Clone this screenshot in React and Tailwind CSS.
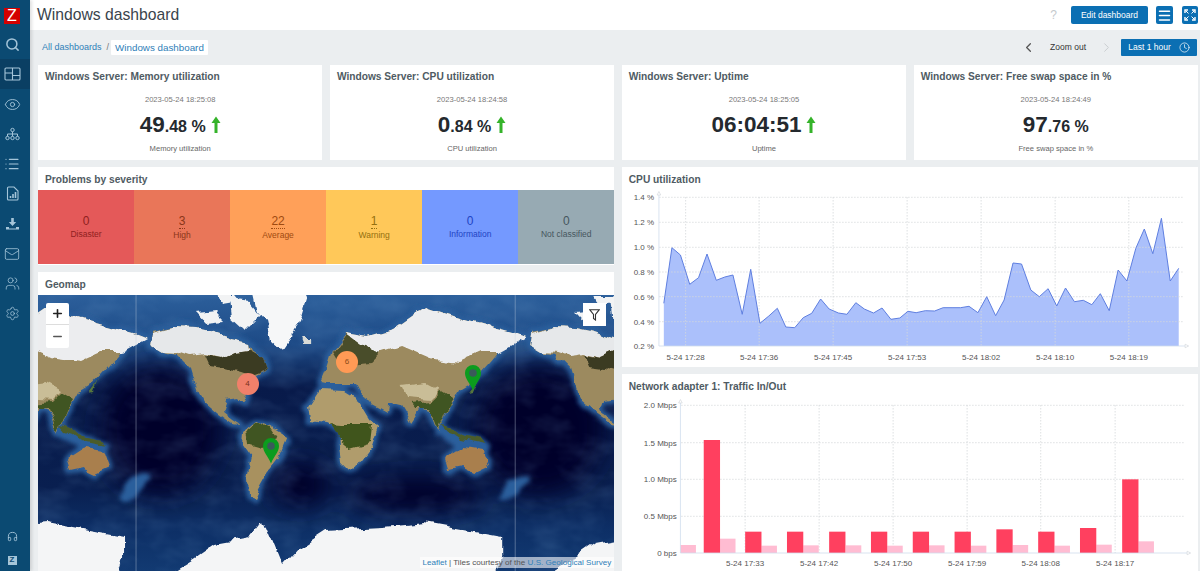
import React from 'react';
import { Search, Eye, List, Mail, Users, Settings, Headphones, ChevronLeft, ChevronRight, Clock, Menu, Plus, Minus } from 'lucide-react';

const font = { fontFamily: '"Liberation Sans", Arial, sans-serif' };

const DashIcon = () => (
  <svg width="17" height="14" viewBox="0 0 17 14" fill="none" stroke="currentColor" strokeWidth="1.1">
    <rect x="1" y="1" width="15" height="12" rx="1" />
    <path d="M8.5 1v12M1 6h7.500M8.500 8.500H16" />
  </svg>
);

const MapIcon = () => (
  <svg width="15" height="14" viewBox="0 0 15 14" fill="none" stroke="currentColor" strokeWidth="1">
    <circle cx="7.500" cy="3" r="1.700" />
    <circle cx="2.500" cy="11" r="1.700" />
    <circle cx="7.500" cy="11" r="1.700" />
    <circle cx="12.500" cy="11" r="1.700" />
    <path d="M7.500 4.700v4.600M2.500 9.300V7h10v2.300" />
  </svg>
);

const ReportIcon = () => (
  <svg width="13" height="15" viewBox="0 0 13 15" fill="none" stroke="currentColor" strokeWidth="1.1">
    <path d="M2.500 1h5.500l4 4v8a1 1 0 0 1-1 1h-8.500a1 1 0 0 1-1-1v-11a1 1 0 0 1 1-1z" />
    <path d="M4.500 12v-2M7 12V8M9.500 12V6" strokeWidth="1.600" />
  </svg>
);

const ImportIcon = () => (
  <svg width="15" height="14" viewBox="0 0 15 14" fill="currentColor">
    <path d="M6.200 1h2.600v4h2.400l-3.700 4-3.700-4h2.400z" />
    <path d="M1 10h3v1.500h7V10h3v2.500H1z" />
  </svg>
);

const CardTitle = ({ children }) => (
  <div className="h-[23px] shrink-0 pl-[7px] pt-[6px] text-[10.200px] leading-[13px] font-bold text-[#4f5b63]">
    {children}
  </div>
);

const UpArrow = () => (
  <svg width="10" height="17" viewBox="0 0 10 17" className="ml-[5px] self-center">
    <path d="M5 0.500 9.500 7H6.500v10h-3V7H0.500z" fill="#35b32a" />
  </svg>
);

const StatCard = ({ title, date, big, small, label, arrow }) => (
  <div className="flex h-[95px] flex-col bg-white">
    <div className="-mt-[1.500px]">
      <CardTitle>{title}</CardTitle>
    </div>
    <div className="mt-[8.500px] text-center text-[7.600px] leading-[10px] text-[#777]">{date}</div>
    <div className="mt-[5px] flex h-[29px] items-center justify-center font-bold text-[#24292e]">
      <span className="text-[22.500px] leading-[29px]">{big}</span>
      {small && <span className="mt-[5px] text-[16px] leading-[20px]">{small}</span>}
      {arrow && <UpArrow />}
    </div>
    <div className="mt-[5px] text-center text-[7.600px] leading-[10px] text-[#666]">{label}</div>
  </div>
);

const severities = [
  { n: '0', label: 'Disaster', bg: 'bg-[#e45959]', text: 'text-[#8f1f1f]' },
  { n: '3', label: 'High', bg: 'bg-[#e97659]', text: 'text-[#8a3518]', link: true },
  { n: '22', label: 'Average', bg: 'bg-[#ffa059]', text: 'text-[#a04a10]', link: true },
  { n: '1', label: 'Warning', bg: 'bg-[#ffc859]', text: 'text-[#95700f]', link: true },
  { n: '0', label: 'Information', bg: 'bg-[#7499ff]', text: 'text-[#1f44c4]' },
  { n: '0', label: 'Not classified', bg: 'bg-[#97aab3]', text: 'text-[#46565e]' },
];

const northAmerica = '152,332 176,327 196,328 214,332 232,338 249,342 252,350 264,358 268,370 252,378 248,392 243,404 239,398 226,400 222,412 232,420 240,425 232,424 218,414 204,402 198,390 192,370 176,354 160,351 150,345';
const southAmerica = '243,432 256,421 270,427 288,438 280,457 268,472 258,490 254,499 249,497 248,477 252,458 242,444';
const africa = '308,408 319,391 345,392 358,400 370,420 378,427 372,445 352,470 342,460 338,430 325,424 310,422';
const eurasia = '320,384 325,372 332,350 345,333 368,337 392,330 425,307 465,320 512,333 525,338 512,337 495,357 488,365 468,387 458,393 453,402 445,413 437,433 428,410 420,407 410,422 400,405 388,402 387,410 365,398 358,385 325,385';
const australia = '445,460 465,447 482,450 488,467 475,473 462,467 448,470';
const islands = '435,425 462,437 486,446 470,452 446,438';
const zealand = '500,498 510,482 526,478 514,492';

const Shelf = () => (
  <g stroke="#2a5f9c" strokeWidth="7" strokeLinejoin="round" fill="#2a5f9c">
    {[northAmerica, southAmerica, africa, eurasia, australia, islands, zealand].map((p) => (
      <polygon key={p} points={p} />
    ))}
  </g>
);

const Land = () => (
  <g>
    {/* americas */}
    <polygon fill="#9c8a5e" points={northAmerica} />
    <polygon fill="#e6e8ea" points="152,333 176,327 196,328 214,332 232,338 249,342 250,350 235,352 222,358 205,354 190,356 178,352 160,351 150,345" />
    <polygon fill="#3a3b24" points="205,355 222,358 235,352 250,350 264,358 268,370 252,376 240,372 225,368 210,366" />
    <polygon fill="#f2f3f4" points="196,312 215,310 225,320 205,322" />
    <polygon fill="#f2f3f4" points="230,300 250,303 260,315 245,330 232,318" />
    <polygon fill="#f2f3f4" points="215,296 235,296 240,302 222,305" />
    <polygon fill="#f6f7f8" points="253,290 304,290 306,298 298,325 281,350 270,340 266,322 258,312" />
    <polygon fill="#d8dad6" points="302,338 312,338 312,343 304,343" />
    <polygon fill="#a8915f" points={southAmerica} />
    <polygon fill="#3f5423" points="246,431 256,422 270,428 278,440 262,448 248,444" />
    {/* africa */}
    <polygon fill="#b09c6c" points={africa} />
    <polygon fill="#41551f" points="328,424 340,425 372,425 370,442 350,448 340,440" />
    {/* eurasia */}
    <polygon fill="#9c8a5e" points={eurasia} />
    <polygon fill="#ecedef" points="345,333 368,337 392,330 425,307 440,312 465,320 512,333 525,338 500,352 480,352 458,362 430,358 400,345 378,352 352,352" />
    <polygon fill="#4a4d2a" points="332,352 345,334 360,345 380,352 370,362 340,365" />
    <polygon fill="#c9bd97" points="402,385 425,382 440,390 430,400 408,398" />
    <polygon fill="#3f5423" points="415,408 428,408 437,431 445,412 453,400 440,392 430,402 412,404" />
    <polygon fill="#4c5c2a" points="440,425 452,428 462,437 446,432" />
    <polygon fill="#4c5c2a" points="452,434 480,440 485,445 460,440" />
    <polygon fill="#a97f4e" points={australia} />
    <polygon fill="#55743c" points="468,394 474,386 477,381 472,393" />
    {/* antarctica */}
    <polygon fill="#f4f5f6" points="159,580 196,557 216,543 249,537 262,520 270,540 281,567 299,547 325,530 382,527 425,523 502,537 502,557 495,580" />
  </g>
);

const Repeat = ({ children }) => (
  <>
    <g transform="translate(-379 0)">{children}</g>
    {children}
    <g transform="translate(379 0)">{children}</g>
  </>
);

const GeoMap = () => (
  <svg viewBox="38 295 576 276" preserveAspectRatio="none" className="block h-full w-full">
    <defs>
      <linearGradient id="sea" x1="0" y1="0" x2="0" y2="1">
        <stop offset="0" stopColor="#2c5f9b" />
        <stop offset="0.18" stopColor="#1d4a86" />
        <stop offset="0.34" stopColor="#081a4a" />
        <stop offset="0.7" stopColor="#091f50" />
        <stop offset="0.85" stopColor="#0d2f66" />
        <stop offset="1" stopColor="#123a72" />
      </linearGradient>
      <filter id="shelf" x="-5%" y="-5%" width="110%" height="110%">
        <feTurbulence type="fractalNoise" baseFrequency="0.045" numOctaves="4" seed="7" result="noise" />
        <feDisplacementMap in="SourceGraphic" in2="noise" scale="11" xChannelSelector="R" yChannelSelector="G" />
        <feGaussianBlur stdDeviation="2.200" />
      </filter>
      <filter id="coast" x="-5%" y="-5%" width="110%" height="110%">
        <feTurbulence type="fractalNoise" baseFrequency="0.045" numOctaves="4" seed="7" result="noise" />
        <feDisplacementMap in="SourceGraphic" in2="noise" scale="11" xChannelSelector="R" yChannelSelector="G" />
        <feGaussianBlur stdDeviation="0.700" />
      </filter>
      <filter id="deep" x="-30%" y="-30%" width="160%" height="160%"><feGaussianBlur stdDeviation="12" /></filter>
      <filter id="mottle" x="0" y="0" width="100%" height="100%">
        <feTurbulence type="fractalNoise" baseFrequency="0.03 0.05" numOctaves="3" seed="3" />
        <feColorMatrix values="0 0 0 0 0.18  0 0 0 0 0.36  0 0 0 0 0.62  1.6 0 0 0 -0.62" />
      </filter>
    </defs>
    <rect x="38" y="295" width="576" height="276" fill="url(#sea)" />
    <g filter="url(#deep)" fill="#020629">
      <ellipse cx="160" cy="430" rx="60" ry="65" />
      <ellipse cx="539" cy="430" rx="65" ry="65" />
      <ellipse cx="300" cy="485" rx="30" ry="22" />
      <ellipse cx="415" cy="495" rx="70" ry="18" />
    </g>
    <rect x="38" y="295" width="576" height="276" filter="url(#mottle)" opacity="0.2" />
    <g filter="url(#shelf)"><Repeat><Shelf /></Repeat></g>
    <g filter="url(#coast)"><Repeat><Land /></Repeat></g>
    <path d="M136 295V571M515 295V571" stroke="#c8d2e0" strokeOpacity="0.55" strokeWidth="0.7" />
  </svg>
);

const Pin = ({ className }) => (
  <svg width="18" height="27" viewBox="0 0 18 27" className={`absolute ${className}`}>
    <path d="M9 26.500C6 19 1 15 1 9a8 8 0 0 1 16 0c0 6-5 10-8 17.500z" fill="#0b9c1e" />
    <circle cx="9" cy="9" r="3.800" fill="#3a5a5a" />
  </svg>
);

const MapCard = () => (
  <div className="flex min-h-0 flex-1 flex-col bg-white">
    <CardTitle>Geomap</CardTitle>
    <div className="relative min-h-0 flex-1 overflow-hidden">
      <GeoMap />
      <div className="absolute top-[8px] left-[8px] flex w-[23px] flex-col rounded-[2px] bg-white text-[#222]">
        <div className="flex h-[22px] items-center justify-center border-b border-[#ddd]"><Plus size={13} strokeWidth={3} /></div>
        <div className="flex h-[23px] items-center justify-center"><Minus size={13} strokeWidth={2.500} className="text-[#555]" /></div>
      </div>
      <div className="absolute top-[8px] right-[8px] flex h-[23px] w-[23px] items-center justify-center bg-white">
        <svg width="11" height="12" viewBox="0 0 11 12" fill="none" stroke="#333" strokeWidth="1.100">
          <path d="M0.700 0.700h9.600L6.500 5.500V11L4.500 9.500V5.500z" />
        </svg>
      </div>
      <div className="absolute top-[78px] left-[198.500px] flex h-[22px] w-[22px] items-center justify-center rounded-full bg-[#f0806a] text-[8px] text-[#7a3020]">4</div>
      <div className="absolute top-[56px] left-[298px] flex h-[22px] w-[22px] items-center justify-center rounded-full bg-[#ff9a55] text-[8px] text-[#8a4a18]">6</div>
      <Pin className="top-[142px] left-[224px]" />
      <Pin className="top-[69px] left-[425.500px]" />
      <div className="absolute right-0 bottom-[3px] bg-white/60 pr-[3px] pl-[2px] text-[8.100px] leading-[11px] text-[#555]">
        <span className="text-[#2f80b8]">Leaflet</span> | Tiles courtesy of the <span className="text-[#2f80b8]">U.S. Geological Survey</span>
      </div>
    </div>
  </div>
);

// zoomed reference coords -> card coords
const cpuRaw = [[118,415],[140,248],[163,270],[188,358],[212,338],[235,267],[260,346],[283,336],[305,330],[330,448],[353,313],[378,475],[402,453],[425,430],[448,486],[472,488],[495,458],[518,445],[542,402],[565,432],[590,444],[613,448],[637,413],[660,432],[685,444],[708,429],[732,463],[756,459],[778,439],[800,443],[825,437],[850,438],[873,428],[897,428],[920,428],[943,424],[967,443],[991,395],[1015,452],[1038,405],[1062,294],[1085,297],[1110,375],[1133,395],[1157,371],[1180,423],[1204,369],[1228,410],[1252,406],[1275,419],[1298,386],[1322,437],[1346,315],[1370,348],[1394,250],[1417,192],[1440,266],[1463,160],[1487,348],[1510,310]];
const cpuPts = cpuRaw.map(([x, y]) => `${(x / 2.703 - 2).toFixed(1)},${(y / 3 - 25).toFixed(1)}`).join(' ');
const cpuFill = `${(118 / 2.703 - 2).toFixed(1)},156 ${cpuPts} ${(1510 / 2.703 - 2).toFixed(1)},156`;

const cpuY = [['1.4 %', 7.300], ['1.2 %', 32.300], ['1.0 %', 57.300], ['0.8 %', 82], ['0.6 %', 106.700], ['0.4 %', 131.700], ['0.2 %', 156]];
const cpuX = [['5-24 17:28', 63.500], ['5-24 17:36', 137], ['5-24 17:45', 211], ['5-24 17:53', 285], ['5-24 18:02', 359], ['5-24 18:10', 433], ['5-24 18:19', 506.700]];

const chartText = { fontSize: 8, fill: '#555' };

const CpuChart = () => (
  <svg viewBox="0 0 576 177" className="block h-[177px] w-full" style={font}>
    <polygon points={cpuFill} fill="#abc0fb" />
    {cpuY.slice(0, 6).map(([t, y]) => (
      <path key={t} d={`M37 ${y}H562`} stroke="#d5d8da" strokeWidth="0.8" strokeDasharray="1.500 1.500" />
    ))}
    {cpuX.map(([t, x]) => (
      <path key={t} d={`M${x} 7V156`} stroke="#d5d8da" strokeWidth="0.8" strokeDasharray="1.500 1.500" />
    ))}
    <polyline points={cpuPts} fill="none" stroke="#5f7fe0" strokeWidth="1" />
    <path d="M36.800 4V156H566" fill="none" stroke="#cfdcec" strokeWidth="0.8" />
    <path d="M35 5 36.800 1.500 38.600 5zM563 154.200 566.500 156 563 157.800z" fill="#fff" stroke="#cfd4d8" strokeWidth="0.6" />
    {cpuY.map(([t, y]) => (
      <text key={t} x="32" y={y + 3} textAnchor="end" {...chartText}>{t}</text>
    ))}
    {cpuX.map(([t, x]) => (
      <text key={t} x={x} y="170" textAnchor="middle" {...chartText}>{t}</text>
    ))}
  </svg>
);

const netRed = [[226,204],[338,479],[451,479],[565,479],[678,479],[791,479],[904,479],[1017,472],[1130,479],[1243,468],[1357,322]];
const netPink = [[163,519],[270,500],[382,521],[495,520],[610,520],[722,521],[835,520],[948,521],[1061,519],[1174,521],[1287,518],[1401,508]];
const netY = [['2.0 Mbps', 8.300], ['1.5 Mbps', 45.700], ['1.0 Mbps', 82.300], ['0.5 Mbps', 119.300], ['0 bps', 156]];
const netX = [['5-24 17:33', 123], ['5-24 17:42', 197], ['5-24 17:50', 271], ['5-24 17:59', 345], ['5-24 18:08', 418.600], ['5-24 18:17', 493]];
const zx = (x) => x / 2.703 - 2;
const zy = (y) => y / 3 - 25;

const NetChart = () => (
  <svg viewBox="0 0 576 177" className="block h-[177px] w-full" style={font}>
    {netY.slice(0, 4).map(([t, y]) => (
      <path key={t} d={`M59 ${y}H562`} stroke="#d5d8da" strokeWidth="0.8" strokeDasharray="1.500 1.500" />
    ))}
    {netX.map(([t, x]) => (
      <path key={t} d={`M${x} 8V156`} stroke="#d5d8da" strokeWidth="0.8" strokeDasharray="1.500 1.500" />
    ))}
    {netPink.map(([x, y]) => (
      <rect key={x} x={zx(x)} y={zy(y)} width="15.500" height={156 - zy(y)} fill="#ffbcd2" />
    ))}
    {netRed.map(([x, y]) => (
      <rect key={x} x={zx(x)} y={zy(y)} width="16.300" height={156 - zy(y)} fill="#ff405f" />
    ))}
    <path d="M58.300 5V156H568" fill="none" stroke="#cfdcec" strokeWidth="0.8" />
    <path d="M56.500 6 58.300 2.500 60.100 6zM565 154.200 568.500 156 565 157.800z" fill="#fff" stroke="#cfd4d8" strokeWidth="0.6" />
    {netY.map(([t, y]) => (
      <text key={t} x="54.600" y={y + 3} textAnchor="end" {...chartText}>{t}</text>
    ))}
    {netX.map(([t, x]) => (
      <text key={t} x={x} y="169" textAnchor="middle" {...chartText}>{t}</text>
    ))}
  </svg>
);

const sideItems = [
  { icon: <Search size={15} strokeWidth={2.400} /> },
  { icon: <DashIcon />, active: true },
  { icon: <Eye size={17} strokeWidth={1.300} /> },
  { icon: <MapIcon /> },
  { icon: <List size={16} strokeWidth={1.800} /> },
  { icon: <ReportIcon /> },
  { icon: <ImportIcon /> },
  { icon: <Mail size={16} strokeWidth={1.200} /> },
  { icon: <Users size={15} strokeWidth={1.200} /> },
  { icon: <Settings size={15} strokeWidth={1.200} /> },
];

const Sidebar = () => (
  <div className="relative flex h-full w-[30px] shrink-0 flex-col items-stretch bg-[#0b4a72] text-[#a5c5d9] shadow-[2px_0_3px_rgba(0,0,0,0.12)]">
    <div className="flex h-[29.500px] items-start justify-start pt-[8px] pl-[4px]">
      <div className="flex h-[16px] w-[16px] items-center justify-center bg-[#d40000] text-[16px] leading-none text-white">Z</div>
    </div>
    {sideItems.map((item, i) => (
      <div key={i} className={`flex h-[29.900px] items-center justify-center pr-[6px] ${item.active ? 'bg-[#0a3f63]' : ''}`}>
        {item.icon}
      </div>
    ))}
    <div className="mt-auto flex h-[30px] items-center justify-center pr-[6px]">
      <Headphones size={11} strokeWidth={2} />
    </div>
    <div className="flex h-[20px] items-center justify-center pr-[6px] pb-[2px]">
      <div className="flex h-[9px] w-[9px] items-center justify-center bg-[#a5c5d9] text-[8px] leading-none font-bold text-[#0b4a72]">Z</div>
    </div>
  </div>
);

export default function App() {
  return (
    <div className="flex h-[571px] w-[1200px] overflow-hidden bg-[#ebeef0]" style={font}>
      <Sidebar />
      <div className="flex min-w-0 flex-1 flex-col">
        <div className="flex h-[30px] shrink-0 items-center bg-white pr-[2px] pl-[7px]">
          <div className="text-[15.700px] leading-[22px] text-[#3a444c]">Windows dashboard</div>
          <div className="ml-auto mr-[14px] text-[12px] text-[#c4c9cd]">?</div>
          <div className="flex h-[18px] w-[77px] items-center justify-center rounded-[2px] bg-[#0b6fb3] text-[8.500px] text-white">Edit dashboard</div>
          <div className="ml-[8px] flex h-[18px] w-[17px] items-center justify-center rounded-[2px] bg-[#0b6fb3] text-white"><Menu size={15} strokeWidth={2.400} /></div>
          <div className="ml-[9px] flex h-[18px] w-[16px] items-center justify-center rounded-[2px] bg-[#0b6fb3] text-white">
            <svg width="12" height="12" viewBox="0 0 12 12" fill="none" stroke="currentColor" strokeWidth="1.400">
              <path d="M1 4V1h3M8 1h3v3M11 8v3H8M4 11H1V8" />
              <path d="M4.500 4.500 2 2M7.500 4.500 10 2M7.500 7.500 10 10M4.500 7.500 2 10" strokeWidth="1" />
            </svg>
          </div>
        </div>
        <div className="flex h-[35px] shrink-0 items-center pr-[3px] pl-[8px]">
          <span className="ml-[4px] text-[9px] leading-[11px] text-[#2f80b8]">All dashboards</span>
          <span className="ml-[5px] mr-[2px] text-[9px] leading-[11px] text-[#777]">/</span>
          <span className="rounded-[1px] bg-white px-[4px] py-[2px] text-[9.800px] leading-[11px] text-[#2f80b8]">Windows dashboard</span>
          <ChevronLeft size={15} strokeWidth={2} className="ml-auto text-[#555]" />
          <span className="ml-[14px] text-[8.500px] text-[#333]">Zoom out</span>
          <ChevronRight size={15} strokeWidth={1.500} className="ml-[13px] text-[#c6cbce]" />
          <div className="ml-[7px] flex h-[17px] w-[76px] items-center justify-center gap-[8px] rounded-[1px] bg-[#0b6fb3] text-[8.500px] text-white">
            Last 1 hour <Clock size={11} strokeWidth={1.500} />
          </div>
        </div>
        <div className="flex min-h-0 flex-1 flex-col gap-[7px] pr-[2px] pl-[8px]">
          <div className="grid shrink-0 grid-cols-4 gap-[7.500px]">
            <StatCard title="Windows Server: Memory utilization" date="2023-05-24 18:25:08" big="49" small=".48 %" label="Memory utilization" arrow />
            <StatCard title="Windows Server: CPU utilization" date="2023-05-24 18:24:58" big="0" small=".84 %" label="CPU utilization" arrow />
            <StatCard title="Windows Server: Uptime" date="2023-05-24 18:25:05" big="06:04:51" label="Uptime" arrow />
            <StatCard title="Windows Server: Free swap space in %" date="2023-05-24 18:24:49" big="97" small=".76 %" label="Free swap space in %" />
          </div>
          <div className="grid min-h-0 flex-1 grid-cols-2 gap-[7.500px]">
            <div className="flex min-h-0 flex-col gap-[7px]">
              <div className="flex h-[98px] shrink-0 flex-col bg-white">
                <CardTitle>Problems by severity</CardTitle>
                <div className="grid flex-1 grid-cols-6 pb-[1px]">
                  {severities.map((s) => (
                    <div key={s.label} className={`flex flex-col items-center justify-center ${s.bg} ${s.text}`}>
                      <span className={`text-[12px] leading-[14px] ${s.link ? 'border-b border-dotted border-current' : ''}`}>{s.n}</span>
                      <span className="mt-[1px] text-[8.500px] leading-[11px]">{s.label}</span>
                    </div>
                  ))}
                </div>
              </div>
              <MapCard />
            </div>
            <div className="flex min-h-0 flex-col gap-[7px]">
              <div className="h-[200px] shrink-0 bg-white">
                <CardTitle>CPU utilization</CardTitle>
                <CpuChart />
              </div>
              <div className="min-h-0 flex-1 bg-white">
                <CardTitle>Network adapter 1: Traffic In/Out</CardTitle>
                <NetChart />
              </div>
            </div>
          </div>
        </div>
      </div>
    </div>
  );
}
